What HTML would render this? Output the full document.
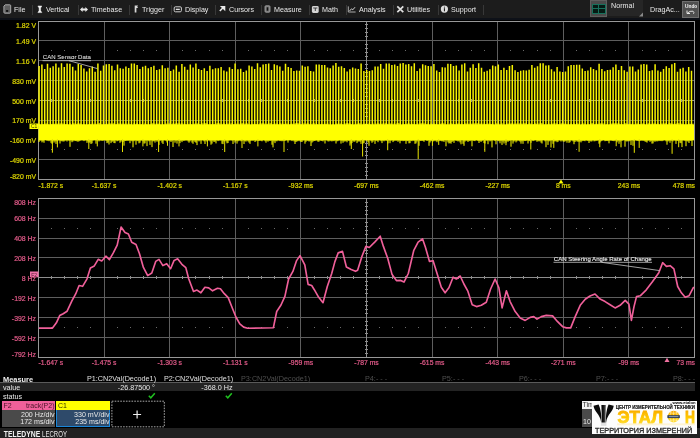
<!DOCTYPE html>
<html><head><meta charset="utf-8"><style>
html,body{margin:0;padding:0;width:700px;height:438px;overflow:hidden;background:#000;}
body{position:relative;font-family:"Liberation Sans",sans-serif;filter:blur(0.3px);}
.a{position:absolute;white-space:nowrap;}
#menu{position:absolute;left:0;top:0;width:700px;height:18px;background:#1c1c1c;}
#menuband{position:absolute;left:0;top:18px;width:700px;height:1.8px;background:#0e1118;}
.mi{position:absolute;top:4.9px;font-size:7.7px;color:#e8e8e8;line-height:10px;transform:scaleX(0.93);transform-origin:0 0;}
.sep{position:absolute;top:5px;width:1px;height:9.5px;background:#383838;}
svg{position:absolute;left:0;top:0;}
</style></head><body>
<div id="menu"></div><div id="menuband"></div>
<div class="mi" style="left:13.7px">File</div>
<div class="mi" style="left:46.3px">Vertical</div>
<div class="mi" style="left:91.2px">Timebase</div>
<div class="mi" style="left:142px">Trigger</div>
<div class="mi" style="left:184.5px">Display</div>
<div class="mi" style="left:228.8px">Cursors</div>
<div class="mi" style="left:273.8px">Measure</div>
<div class="mi" style="left:322px">Math</div>
<div class="mi" style="left:358.8px">Analysis</div>
<div class="mi" style="left:407px">Utilities</div>
<div class="mi" style="left:451.3px">Support</div>
<div class="sep" style="left:32.2px"></div>
<div class="sep" style="left:78px"></div>
<div class="sep" style="left:128.7px"></div>
<div class="sep" style="left:171.2px"></div>
<div class="sep" style="left:214.5px"></div>
<div class="sep" style="left:260.5px"></div>
<div class="sep" style="left:308.7px"></div>
<div class="sep" style="left:346.2px"></div>
<div class="sep" style="left:393px"></div>
<div class="sep" style="left:437.5px"></div>
<div class="sep" style="left:482.5px"></div>
<svg width="700" height="19" style="position:absolute;left:0;top:0">
<path d="M5.2 4.8 H9.8 Q10.7 4.8 10.7 5.7 V12.3 Q10.7 13.2 9.8 13.2 H4.8 Q3.9 13.2 3.9 12.3 V6.2 Z" fill="#5e5e5e" stroke="#b4b4b4" stroke-width="0.9"/>
<rect x="6.1" y="10" width="2.1" height="1.9" fill="#111"/>
<path d="M37.9 6 H41.8 L40.6 8 V10.6 L41.8 12.6 H37.9 L39.1 10.6 V8 Z" fill="#f2f2f2" stroke="#f2f2f2" stroke-width="0.5"/>
<path d="M80 9.5 L82.6 7 V8.6 H85.4 V7 L88 9.5 L85.4 12 V10.4 H82.6 V12 Z" fill="#e8e8e8"/>
<path d="M134.7 12.4 V5.6 H138.1 L137.2 6.8 L138.1 8 H136.4 V12.4 Z" fill="#d8d8d8"/>
<rect x="174.2" y="6.8" width="7.2" height="5" rx="1.2" fill="none" stroke="#cfcfcf" stroke-width="1"/>
<rect x="175.8" y="8.7" width="4" height="1.3" fill="#e0e0e0"/>
<path d="M219.8 11 L223 7.8 M221.8 6.7 H224.5 V9.4 Z" stroke="#e8e8e8" stroke-width="1.6" fill="#e8e8e8"/>
<rect x="265" y="5.8" width="5" height="6.4" rx="0.9" fill="#777" stroke="#aaa" stroke-width="0.8"/>
<rect x="266.7" y="7.3" width="1.6" height="3.4" fill="#111"/>
<rect x="311.9" y="6" width="6.8" height="6.9" rx="1.4" fill="#d4d4d4"/>
<path d="M313.2 8 H317.4 M315.3 8 V11" stroke="#333" stroke-width="0.9"/>
<path d="M348.3 6.4 V12 H355.6" stroke="#bbb" stroke-width="0.9" fill="none"/>
<path d="M349.5 11 L351.5 8.8 L352.8 9.8 L355 7.2" stroke="#d0d0d0" stroke-width="1" fill="none"/>
<path d="M397.3 6.3 L403.3 12.2 M403.3 6.3 L397.3 12.2" stroke="#e0e0e0" stroke-width="1.7"/>
<circle cx="444.4" cy="9.1" r="3.6" fill="#dcdcdc"/>
<rect x="443.9" y="8.2" width="1.1" height="3.1" fill="#222"/><rect x="443.9" y="6.7" width="1.1" height="0.9" fill="#222"/>
</svg>
<div class="a" style="left:589.7px;top:0;width:17.2px;height:16.7px;background:#4a4a4a;box-sizing:border-box;border:1px solid #5e5e5e;"></div>
<div class="a" style="left:591.9px;top:3.9px;width:13.7px;height:9.8px;background:#051a14;box-sizing:border-box;border:1px solid #17705c;"></div>
<div class="a" style="left:598.3px;top:3.9px;width:1px;height:9.8px;background:#17705c;"></div>
<div class="a" style="left:591.9px;top:8.3px;width:13.7px;height:1px;background:#17705c;"></div>
<div class="a" style="left:606.9px;top:0;width:36.4px;height:16px;background:#262626;"></div>
<div class="mi" style="left:611.1px;top:0.8px;">Normal</div>
<svg class="a" style="left:638px;top:11.5px" width="6" height="5"><path d="M5 0.5 V4.5 H1 Z" fill="#8a8a8a"/></svg>
<div class="mi" style="left:650px;top:5.3px;">DragAc...</div>
<div class="a" style="left:681.9px;top:1px;width:17px;height:16.5px;background:#505050;box-sizing:border-box;border:1px solid #6e6e6e;"></div>
<div class="mi" style="left:684.6px;top:2.2px;font-size:5.6px;color:#f4f4f4;line-height:8px;font-weight:bold;transform:scaleX(0.86)">Undo</div>
<svg class="a" style="left:685px;top:9px" width="12" height="6"><path d="M2 1.5 V4.5 H5" stroke="#e8e8e8" stroke-width="1" fill="none"/><path d="M2.2 4.3 Q5 1.5 8 2.2 Q9.5 3 8.5 4.8" stroke="#e8e8e8" stroke-width="0.9" fill="none"/></svg>

<svg width="700" height="438" viewBox="0 0 700 438">
<line x1="104.5" y1="21.5" x2="104.5" y2="179.5" stroke="#5e5e5e" stroke-width="1"/>
<line x1="169.5" y1="21.5" x2="169.5" y2="179.5" stroke="#5e5e5e" stroke-width="1"/>
<line x1="235.5" y1="21.5" x2="235.5" y2="179.5" stroke="#5e5e5e" stroke-width="1"/>
<line x1="300.5" y1="21.5" x2="300.5" y2="179.5" stroke="#5e5e5e" stroke-width="1"/>
<line x1="432.5" y1="21.5" x2="432.5" y2="179.5" stroke="#5e5e5e" stroke-width="1"/>
<line x1="497.5" y1="21.5" x2="497.5" y2="179.5" stroke="#5e5e5e" stroke-width="1"/>
<line x1="563.5" y1="21.5" x2="563.5" y2="179.5" stroke="#5e5e5e" stroke-width="1"/>
<line x1="628.5" y1="21.5" x2="628.5" y2="179.5" stroke="#5e5e5e" stroke-width="1"/>
<line x1="38.5" y1="40.5" x2="694.5" y2="40.5" stroke="#5e5e5e" stroke-width="1"/>
<line x1="38.5" y1="60.5" x2="694.5" y2="60.5" stroke="#5e5e5e" stroke-width="1"/>
<line x1="38.5" y1="80.5" x2="694.5" y2="80.5" stroke="#5e5e5e" stroke-width="1"/>
<line x1="38.5" y1="120.5" x2="694.5" y2="120.5" stroke="#5e5e5e" stroke-width="1"/>
<line x1="38.5" y1="139.5" x2="694.5" y2="139.5" stroke="#5e5e5e" stroke-width="1"/>
<line x1="38.5" y1="159.5" x2="694.5" y2="159.5" stroke="#5e5e5e" stroke-width="1"/>
<line x1="366.5" y1="21.5" x2="366.5" y2="179.5" stroke="#8e8e8e" stroke-width="1"/>
<line x1="38.5" y1="100.5" x2="694.5" y2="100.5" stroke="#8e8e8e" stroke-width="1"/>
<rect x="365.0" y="24.0" width="3" height="1" fill="#8e8e8e"/>
<rect x="365.0" y="28.0" width="3" height="1" fill="#8e8e8e"/>
<rect x="365.0" y="32.0" width="3" height="1" fill="#8e8e8e"/>
<rect x="365.0" y="36.0" width="3" height="1" fill="#8e8e8e"/>
<rect x="365.0" y="44.0" width="3" height="1" fill="#8e8e8e"/>
<rect x="365.0" y="48.0" width="3" height="1" fill="#8e8e8e"/>
<rect x="365.0" y="52.0" width="3" height="1" fill="#8e8e8e"/>
<rect x="365.0" y="56.0" width="3" height="1" fill="#8e8e8e"/>
<rect x="365.0" y="64.0" width="3" height="1" fill="#8e8e8e"/>
<rect x="365.0" y="68.0" width="3" height="1" fill="#8e8e8e"/>
<rect x="365.0" y="72.0" width="3" height="1" fill="#8e8e8e"/>
<rect x="365.0" y="76.0" width="3" height="1" fill="#8e8e8e"/>
<rect x="365.0" y="84.0" width="3" height="1" fill="#8e8e8e"/>
<rect x="365.0" y="88.0" width="3" height="1" fill="#8e8e8e"/>
<rect x="365.0" y="92.0" width="3" height="1" fill="#8e8e8e"/>
<rect x="365.0" y="96.0" width="3" height="1" fill="#8e8e8e"/>
<rect x="365.0" y="104.0" width="3" height="1" fill="#8e8e8e"/>
<rect x="365.0" y="108.0" width="3" height="1" fill="#8e8e8e"/>
<rect x="365.0" y="112.0" width="3" height="1" fill="#8e8e8e"/>
<rect x="365.0" y="116.0" width="3" height="1" fill="#8e8e8e"/>
<rect x="365.0" y="124.0" width="3" height="1" fill="#8e8e8e"/>
<rect x="365.0" y="127.0" width="3" height="1" fill="#8e8e8e"/>
<rect x="365.0" y="131.0" width="3" height="1" fill="#8e8e8e"/>
<rect x="365.0" y="135.0" width="3" height="1" fill="#8e8e8e"/>
<rect x="365.0" y="143.0" width="3" height="1" fill="#8e8e8e"/>
<rect x="365.0" y="147.0" width="3" height="1" fill="#8e8e8e"/>
<rect x="365.0" y="151.0" width="3" height="1" fill="#8e8e8e"/>
<rect x="365.0" y="155.0" width="3" height="1" fill="#8e8e8e"/>
<rect x="365.0" y="163.0" width="3" height="1" fill="#8e8e8e"/>
<rect x="365.0" y="167.0" width="3" height="1" fill="#8e8e8e"/>
<rect x="365.0" y="171.0" width="3" height="1" fill="#8e8e8e"/>
<rect x="365.0" y="175.0" width="3" height="1" fill="#8e8e8e"/>
<rect x="51.0" y="99.0" width="1" height="3" fill="#8e8e8e"/>
<rect x="64.0" y="99.0" width="1" height="3" fill="#8e8e8e"/>
<rect x="77.0" y="99.0" width="1" height="3" fill="#8e8e8e"/>
<rect x="90.0" y="99.0" width="1" height="3" fill="#8e8e8e"/>
<rect x="117.0" y="99.0" width="1" height="3" fill="#8e8e8e"/>
<rect x="130.0" y="99.0" width="1" height="3" fill="#8e8e8e"/>
<rect x="143.0" y="99.0" width="1" height="3" fill="#8e8e8e"/>
<rect x="156.0" y="99.0" width="1" height="3" fill="#8e8e8e"/>
<rect x="182.0" y="99.0" width="1" height="3" fill="#8e8e8e"/>
<rect x="195.0" y="99.0" width="1" height="3" fill="#8e8e8e"/>
<rect x="209.0" y="99.0" width="1" height="3" fill="#8e8e8e"/>
<rect x="222.0" y="99.0" width="1" height="3" fill="#8e8e8e"/>
<rect x="248.0" y="99.0" width="1" height="3" fill="#8e8e8e"/>
<rect x="261.0" y="99.0" width="1" height="3" fill="#8e8e8e"/>
<rect x="274.0" y="99.0" width="1" height="3" fill="#8e8e8e"/>
<rect x="287.0" y="99.0" width="1" height="3" fill="#8e8e8e"/>
<rect x="314.0" y="99.0" width="1" height="3" fill="#8e8e8e"/>
<rect x="327.0" y="99.0" width="1" height="3" fill="#8e8e8e"/>
<rect x="340.0" y="99.0" width="1" height="3" fill="#8e8e8e"/>
<rect x="353.0" y="99.0" width="1" height="3" fill="#8e8e8e"/>
<rect x="379.0" y="99.0" width="1" height="3" fill="#8e8e8e"/>
<rect x="392.0" y="99.0" width="1" height="3" fill="#8e8e8e"/>
<rect x="405.0" y="99.0" width="1" height="3" fill="#8e8e8e"/>
<rect x="418.0" y="99.0" width="1" height="3" fill="#8e8e8e"/>
<rect x="445.0" y="99.0" width="1" height="3" fill="#8e8e8e"/>
<rect x="458.0" y="99.0" width="1" height="3" fill="#8e8e8e"/>
<rect x="471.0" y="99.0" width="1" height="3" fill="#8e8e8e"/>
<rect x="484.0" y="99.0" width="1" height="3" fill="#8e8e8e"/>
<rect x="510.0" y="99.0" width="1" height="3" fill="#8e8e8e"/>
<rect x="523.0" y="99.0" width="1" height="3" fill="#8e8e8e"/>
<rect x="537.0" y="99.0" width="1" height="3" fill="#8e8e8e"/>
<rect x="550.0" y="99.0" width="1" height="3" fill="#8e8e8e"/>
<rect x="576.0" y="99.0" width="1" height="3" fill="#8e8e8e"/>
<rect x="589.0" y="99.0" width="1" height="3" fill="#8e8e8e"/>
<rect x="602.0" y="99.0" width="1" height="3" fill="#8e8e8e"/>
<rect x="615.0" y="99.0" width="1" height="3" fill="#8e8e8e"/>
<rect x="642.0" y="99.0" width="1" height="3" fill="#8e8e8e"/>
<rect x="655.0" y="99.0" width="1" height="3" fill="#8e8e8e"/>
<rect x="668.0" y="99.0" width="1" height="3" fill="#8e8e8e"/>
<rect x="681.0" y="99.0" width="1" height="3" fill="#8e8e8e"/>
<rect x="51.0" y="50.0" width="1" height="1" fill="#6a6a6a"/>
<rect x="64.0" y="50.0" width="1" height="1" fill="#6a6a6a"/>
<rect x="77.0" y="50.0" width="1" height="1" fill="#6a6a6a"/>
<rect x="90.0" y="50.0" width="1" height="1" fill="#6a6a6a"/>
<rect x="117.0" y="50.0" width="1" height="1" fill="#6a6a6a"/>
<rect x="130.0" y="50.0" width="1" height="1" fill="#6a6a6a"/>
<rect x="143.0" y="50.0" width="1" height="1" fill="#6a6a6a"/>
<rect x="156.0" y="50.0" width="1" height="1" fill="#6a6a6a"/>
<rect x="182.0" y="50.0" width="1" height="1" fill="#6a6a6a"/>
<rect x="195.0" y="50.0" width="1" height="1" fill="#6a6a6a"/>
<rect x="209.0" y="50.0" width="1" height="1" fill="#6a6a6a"/>
<rect x="222.0" y="50.0" width="1" height="1" fill="#6a6a6a"/>
<rect x="248.0" y="50.0" width="1" height="1" fill="#6a6a6a"/>
<rect x="261.0" y="50.0" width="1" height="1" fill="#6a6a6a"/>
<rect x="274.0" y="50.0" width="1" height="1" fill="#6a6a6a"/>
<rect x="287.0" y="50.0" width="1" height="1" fill="#6a6a6a"/>
<rect x="314.0" y="50.0" width="1" height="1" fill="#6a6a6a"/>
<rect x="327.0" y="50.0" width="1" height="1" fill="#6a6a6a"/>
<rect x="340.0" y="50.0" width="1" height="1" fill="#6a6a6a"/>
<rect x="353.0" y="50.0" width="1" height="1" fill="#6a6a6a"/>
<rect x="379.0" y="50.0" width="1" height="1" fill="#6a6a6a"/>
<rect x="392.0" y="50.0" width="1" height="1" fill="#6a6a6a"/>
<rect x="405.0" y="50.0" width="1" height="1" fill="#6a6a6a"/>
<rect x="418.0" y="50.0" width="1" height="1" fill="#6a6a6a"/>
<rect x="445.0" y="50.0" width="1" height="1" fill="#6a6a6a"/>
<rect x="458.0" y="50.0" width="1" height="1" fill="#6a6a6a"/>
<rect x="471.0" y="50.0" width="1" height="1" fill="#6a6a6a"/>
<rect x="484.0" y="50.0" width="1" height="1" fill="#6a6a6a"/>
<rect x="510.0" y="50.0" width="1" height="1" fill="#6a6a6a"/>
<rect x="523.0" y="50.0" width="1" height="1" fill="#6a6a6a"/>
<rect x="537.0" y="50.0" width="1" height="1" fill="#6a6a6a"/>
<rect x="550.0" y="50.0" width="1" height="1" fill="#6a6a6a"/>
<rect x="576.0" y="50.0" width="1" height="1" fill="#6a6a6a"/>
<rect x="589.0" y="50.0" width="1" height="1" fill="#6a6a6a"/>
<rect x="602.0" y="50.0" width="1" height="1" fill="#6a6a6a"/>
<rect x="615.0" y="50.0" width="1" height="1" fill="#6a6a6a"/>
<rect x="642.0" y="50.0" width="1" height="1" fill="#6a6a6a"/>
<rect x="655.0" y="50.0" width="1" height="1" fill="#6a6a6a"/>
<rect x="668.0" y="50.0" width="1" height="1" fill="#6a6a6a"/>
<rect x="681.0" y="50.0" width="1" height="1" fill="#6a6a6a"/>
<rect x="51.0" y="149.0" width="1" height="1" fill="#6a6a6a"/>
<rect x="64.0" y="149.0" width="1" height="1" fill="#6a6a6a"/>
<rect x="77.0" y="149.0" width="1" height="1" fill="#6a6a6a"/>
<rect x="90.0" y="149.0" width="1" height="1" fill="#6a6a6a"/>
<rect x="117.0" y="149.0" width="1" height="1" fill="#6a6a6a"/>
<rect x="130.0" y="149.0" width="1" height="1" fill="#6a6a6a"/>
<rect x="143.0" y="149.0" width="1" height="1" fill="#6a6a6a"/>
<rect x="156.0" y="149.0" width="1" height="1" fill="#6a6a6a"/>
<rect x="182.0" y="149.0" width="1" height="1" fill="#6a6a6a"/>
<rect x="195.0" y="149.0" width="1" height="1" fill="#6a6a6a"/>
<rect x="209.0" y="149.0" width="1" height="1" fill="#6a6a6a"/>
<rect x="222.0" y="149.0" width="1" height="1" fill="#6a6a6a"/>
<rect x="248.0" y="149.0" width="1" height="1" fill="#6a6a6a"/>
<rect x="261.0" y="149.0" width="1" height="1" fill="#6a6a6a"/>
<rect x="274.0" y="149.0" width="1" height="1" fill="#6a6a6a"/>
<rect x="287.0" y="149.0" width="1" height="1" fill="#6a6a6a"/>
<rect x="314.0" y="149.0" width="1" height="1" fill="#6a6a6a"/>
<rect x="327.0" y="149.0" width="1" height="1" fill="#6a6a6a"/>
<rect x="340.0" y="149.0" width="1" height="1" fill="#6a6a6a"/>
<rect x="353.0" y="149.0" width="1" height="1" fill="#6a6a6a"/>
<rect x="379.0" y="149.0" width="1" height="1" fill="#6a6a6a"/>
<rect x="392.0" y="149.0" width="1" height="1" fill="#6a6a6a"/>
<rect x="405.0" y="149.0" width="1" height="1" fill="#6a6a6a"/>
<rect x="418.0" y="149.0" width="1" height="1" fill="#6a6a6a"/>
<rect x="445.0" y="149.0" width="1" height="1" fill="#6a6a6a"/>
<rect x="458.0" y="149.0" width="1" height="1" fill="#6a6a6a"/>
<rect x="471.0" y="149.0" width="1" height="1" fill="#6a6a6a"/>
<rect x="484.0" y="149.0" width="1" height="1" fill="#6a6a6a"/>
<rect x="510.0" y="149.0" width="1" height="1" fill="#6a6a6a"/>
<rect x="523.0" y="149.0" width="1" height="1" fill="#6a6a6a"/>
<rect x="537.0" y="149.0" width="1" height="1" fill="#6a6a6a"/>
<rect x="550.0" y="149.0" width="1" height="1" fill="#6a6a6a"/>
<rect x="576.0" y="149.0" width="1" height="1" fill="#6a6a6a"/>
<rect x="589.0" y="149.0" width="1" height="1" fill="#6a6a6a"/>
<rect x="602.0" y="149.0" width="1" height="1" fill="#6a6a6a"/>
<rect x="615.0" y="149.0" width="1" height="1" fill="#6a6a6a"/>
<rect x="642.0" y="149.0" width="1" height="1" fill="#6a6a6a"/>
<rect x="655.0" y="149.0" width="1" height="1" fill="#6a6a6a"/>
<rect x="668.0" y="149.0" width="1" height="1" fill="#6a6a6a"/>
<rect x="681.0" y="149.0" width="1" height="1" fill="#6a6a6a"/>
<rect x="38.5" y="21.5" width="656.0" height="158.0" fill="none" stroke="#989898" stroke-width="1"/>
<line x1="104.5" y1="198.5" x2="104.5" y2="357.5" stroke="#5e5e5e" stroke-width="1"/>
<line x1="169.5" y1="198.5" x2="169.5" y2="357.5" stroke="#5e5e5e" stroke-width="1"/>
<line x1="235.5" y1="198.5" x2="235.5" y2="357.5" stroke="#5e5e5e" stroke-width="1"/>
<line x1="300.5" y1="198.5" x2="300.5" y2="357.5" stroke="#5e5e5e" stroke-width="1"/>
<line x1="432.5" y1="198.5" x2="432.5" y2="357.5" stroke="#5e5e5e" stroke-width="1"/>
<line x1="497.5" y1="198.5" x2="497.5" y2="357.5" stroke="#5e5e5e" stroke-width="1"/>
<line x1="563.5" y1="198.5" x2="563.5" y2="357.5" stroke="#5e5e5e" stroke-width="1"/>
<line x1="628.5" y1="198.5" x2="628.5" y2="357.5" stroke="#5e5e5e" stroke-width="1"/>
<line x1="38.5" y1="218.5" x2="694.5" y2="218.5" stroke="#5e5e5e" stroke-width="1"/>
<line x1="38.5" y1="238.5" x2="694.5" y2="238.5" stroke="#5e5e5e" stroke-width="1"/>
<line x1="38.5" y1="257.5" x2="694.5" y2="257.5" stroke="#5e5e5e" stroke-width="1"/>
<line x1="38.5" y1="297.5" x2="694.5" y2="297.5" stroke="#5e5e5e" stroke-width="1"/>
<line x1="38.5" y1="317.5" x2="694.5" y2="317.5" stroke="#5e5e5e" stroke-width="1"/>
<line x1="38.5" y1="337.5" x2="694.5" y2="337.5" stroke="#5e5e5e" stroke-width="1"/>
<line x1="366.5" y1="198.5" x2="366.5" y2="357.5" stroke="#8e8e8e" stroke-width="1"/>
<line x1="38.5" y1="277.5" x2="694.5" y2="277.5" stroke="#8e8e8e" stroke-width="1"/>
<rect x="365.0" y="202.0" width="3" height="1" fill="#8e8e8e"/>
<rect x="365.0" y="206.0" width="3" height="1" fill="#8e8e8e"/>
<rect x="365.0" y="210.0" width="3" height="1" fill="#8e8e8e"/>
<rect x="365.0" y="214.0" width="3" height="1" fill="#8e8e8e"/>
<rect x="365.0" y="222.0" width="3" height="1" fill="#8e8e8e"/>
<rect x="365.0" y="226.0" width="3" height="1" fill="#8e8e8e"/>
<rect x="365.0" y="230.0" width="3" height="1" fill="#8e8e8e"/>
<rect x="365.0" y="234.0" width="3" height="1" fill="#8e8e8e"/>
<rect x="365.0" y="242.0" width="3" height="1" fill="#8e8e8e"/>
<rect x="365.0" y="246.0" width="3" height="1" fill="#8e8e8e"/>
<rect x="365.0" y="250.0" width="3" height="1" fill="#8e8e8e"/>
<rect x="365.0" y="253.0" width="3" height="1" fill="#8e8e8e"/>
<rect x="365.0" y="261.0" width="3" height="1" fill="#8e8e8e"/>
<rect x="365.0" y="265.0" width="3" height="1" fill="#8e8e8e"/>
<rect x="365.0" y="269.0" width="3" height="1" fill="#8e8e8e"/>
<rect x="365.0" y="273.0" width="3" height="1" fill="#8e8e8e"/>
<rect x="365.0" y="281.0" width="3" height="1" fill="#8e8e8e"/>
<rect x="365.0" y="285.0" width="3" height="1" fill="#8e8e8e"/>
<rect x="365.0" y="289.0" width="3" height="1" fill="#8e8e8e"/>
<rect x="365.0" y="293.0" width="3" height="1" fill="#8e8e8e"/>
<rect x="365.0" y="301.0" width="3" height="1" fill="#8e8e8e"/>
<rect x="365.0" y="305.0" width="3" height="1" fill="#8e8e8e"/>
<rect x="365.0" y="309.0" width="3" height="1" fill="#8e8e8e"/>
<rect x="365.0" y="313.0" width="3" height="1" fill="#8e8e8e"/>
<rect x="365.0" y="321.0" width="3" height="1" fill="#8e8e8e"/>
<rect x="365.0" y="325.0" width="3" height="1" fill="#8e8e8e"/>
<rect x="365.0" y="329.0" width="3" height="1" fill="#8e8e8e"/>
<rect x="365.0" y="333.0" width="3" height="1" fill="#8e8e8e"/>
<rect x="365.0" y="341.0" width="3" height="1" fill="#8e8e8e"/>
<rect x="365.0" y="345.0" width="3" height="1" fill="#8e8e8e"/>
<rect x="365.0" y="349.0" width="3" height="1" fill="#8e8e8e"/>
<rect x="365.0" y="353.0" width="3" height="1" fill="#8e8e8e"/>
<rect x="51.0" y="276.0" width="1" height="3" fill="#8e8e8e"/>
<rect x="64.0" y="276.0" width="1" height="3" fill="#8e8e8e"/>
<rect x="77.0" y="276.0" width="1" height="3" fill="#8e8e8e"/>
<rect x="90.0" y="276.0" width="1" height="3" fill="#8e8e8e"/>
<rect x="117.0" y="276.0" width="1" height="3" fill="#8e8e8e"/>
<rect x="130.0" y="276.0" width="1" height="3" fill="#8e8e8e"/>
<rect x="143.0" y="276.0" width="1" height="3" fill="#8e8e8e"/>
<rect x="156.0" y="276.0" width="1" height="3" fill="#8e8e8e"/>
<rect x="182.0" y="276.0" width="1" height="3" fill="#8e8e8e"/>
<rect x="195.0" y="276.0" width="1" height="3" fill="#8e8e8e"/>
<rect x="209.0" y="276.0" width="1" height="3" fill="#8e8e8e"/>
<rect x="222.0" y="276.0" width="1" height="3" fill="#8e8e8e"/>
<rect x="248.0" y="276.0" width="1" height="3" fill="#8e8e8e"/>
<rect x="261.0" y="276.0" width="1" height="3" fill="#8e8e8e"/>
<rect x="274.0" y="276.0" width="1" height="3" fill="#8e8e8e"/>
<rect x="287.0" y="276.0" width="1" height="3" fill="#8e8e8e"/>
<rect x="314.0" y="276.0" width="1" height="3" fill="#8e8e8e"/>
<rect x="327.0" y="276.0" width="1" height="3" fill="#8e8e8e"/>
<rect x="340.0" y="276.0" width="1" height="3" fill="#8e8e8e"/>
<rect x="353.0" y="276.0" width="1" height="3" fill="#8e8e8e"/>
<rect x="379.0" y="276.0" width="1" height="3" fill="#8e8e8e"/>
<rect x="392.0" y="276.0" width="1" height="3" fill="#8e8e8e"/>
<rect x="405.0" y="276.0" width="1" height="3" fill="#8e8e8e"/>
<rect x="418.0" y="276.0" width="1" height="3" fill="#8e8e8e"/>
<rect x="445.0" y="276.0" width="1" height="3" fill="#8e8e8e"/>
<rect x="458.0" y="276.0" width="1" height="3" fill="#8e8e8e"/>
<rect x="471.0" y="276.0" width="1" height="3" fill="#8e8e8e"/>
<rect x="484.0" y="276.0" width="1" height="3" fill="#8e8e8e"/>
<rect x="510.0" y="276.0" width="1" height="3" fill="#8e8e8e"/>
<rect x="523.0" y="276.0" width="1" height="3" fill="#8e8e8e"/>
<rect x="537.0" y="276.0" width="1" height="3" fill="#8e8e8e"/>
<rect x="550.0" y="276.0" width="1" height="3" fill="#8e8e8e"/>
<rect x="576.0" y="276.0" width="1" height="3" fill="#8e8e8e"/>
<rect x="589.0" y="276.0" width="1" height="3" fill="#8e8e8e"/>
<rect x="602.0" y="276.0" width="1" height="3" fill="#8e8e8e"/>
<rect x="615.0" y="276.0" width="1" height="3" fill="#8e8e8e"/>
<rect x="642.0" y="276.0" width="1" height="3" fill="#8e8e8e"/>
<rect x="655.0" y="276.0" width="1" height="3" fill="#8e8e8e"/>
<rect x="668.0" y="276.0" width="1" height="3" fill="#8e8e8e"/>
<rect x="681.0" y="276.0" width="1" height="3" fill="#8e8e8e"/>
<rect x="51.0" y="228.0" width="1" height="1" fill="#6a6a6a"/>
<rect x="64.0" y="228.0" width="1" height="1" fill="#6a6a6a"/>
<rect x="77.0" y="228.0" width="1" height="1" fill="#6a6a6a"/>
<rect x="90.0" y="228.0" width="1" height="1" fill="#6a6a6a"/>
<rect x="117.0" y="228.0" width="1" height="1" fill="#6a6a6a"/>
<rect x="130.0" y="228.0" width="1" height="1" fill="#6a6a6a"/>
<rect x="143.0" y="228.0" width="1" height="1" fill="#6a6a6a"/>
<rect x="156.0" y="228.0" width="1" height="1" fill="#6a6a6a"/>
<rect x="182.0" y="228.0" width="1" height="1" fill="#6a6a6a"/>
<rect x="195.0" y="228.0" width="1" height="1" fill="#6a6a6a"/>
<rect x="209.0" y="228.0" width="1" height="1" fill="#6a6a6a"/>
<rect x="222.0" y="228.0" width="1" height="1" fill="#6a6a6a"/>
<rect x="248.0" y="228.0" width="1" height="1" fill="#6a6a6a"/>
<rect x="261.0" y="228.0" width="1" height="1" fill="#6a6a6a"/>
<rect x="274.0" y="228.0" width="1" height="1" fill="#6a6a6a"/>
<rect x="287.0" y="228.0" width="1" height="1" fill="#6a6a6a"/>
<rect x="314.0" y="228.0" width="1" height="1" fill="#6a6a6a"/>
<rect x="327.0" y="228.0" width="1" height="1" fill="#6a6a6a"/>
<rect x="340.0" y="228.0" width="1" height="1" fill="#6a6a6a"/>
<rect x="353.0" y="228.0" width="1" height="1" fill="#6a6a6a"/>
<rect x="379.0" y="228.0" width="1" height="1" fill="#6a6a6a"/>
<rect x="392.0" y="228.0" width="1" height="1" fill="#6a6a6a"/>
<rect x="405.0" y="228.0" width="1" height="1" fill="#6a6a6a"/>
<rect x="418.0" y="228.0" width="1" height="1" fill="#6a6a6a"/>
<rect x="445.0" y="228.0" width="1" height="1" fill="#6a6a6a"/>
<rect x="458.0" y="228.0" width="1" height="1" fill="#6a6a6a"/>
<rect x="471.0" y="228.0" width="1" height="1" fill="#6a6a6a"/>
<rect x="484.0" y="228.0" width="1" height="1" fill="#6a6a6a"/>
<rect x="510.0" y="228.0" width="1" height="1" fill="#6a6a6a"/>
<rect x="523.0" y="228.0" width="1" height="1" fill="#6a6a6a"/>
<rect x="537.0" y="228.0" width="1" height="1" fill="#6a6a6a"/>
<rect x="550.0" y="228.0" width="1" height="1" fill="#6a6a6a"/>
<rect x="576.0" y="228.0" width="1" height="1" fill="#6a6a6a"/>
<rect x="589.0" y="228.0" width="1" height="1" fill="#6a6a6a"/>
<rect x="602.0" y="228.0" width="1" height="1" fill="#6a6a6a"/>
<rect x="615.0" y="228.0" width="1" height="1" fill="#6a6a6a"/>
<rect x="642.0" y="228.0" width="1" height="1" fill="#6a6a6a"/>
<rect x="655.0" y="228.0" width="1" height="1" fill="#6a6a6a"/>
<rect x="668.0" y="228.0" width="1" height="1" fill="#6a6a6a"/>
<rect x="681.0" y="228.0" width="1" height="1" fill="#6a6a6a"/>
<rect x="51.0" y="327.0" width="1" height="1" fill="#6a6a6a"/>
<rect x="64.0" y="327.0" width="1" height="1" fill="#6a6a6a"/>
<rect x="77.0" y="327.0" width="1" height="1" fill="#6a6a6a"/>
<rect x="90.0" y="327.0" width="1" height="1" fill="#6a6a6a"/>
<rect x="117.0" y="327.0" width="1" height="1" fill="#6a6a6a"/>
<rect x="130.0" y="327.0" width="1" height="1" fill="#6a6a6a"/>
<rect x="143.0" y="327.0" width="1" height="1" fill="#6a6a6a"/>
<rect x="156.0" y="327.0" width="1" height="1" fill="#6a6a6a"/>
<rect x="182.0" y="327.0" width="1" height="1" fill="#6a6a6a"/>
<rect x="195.0" y="327.0" width="1" height="1" fill="#6a6a6a"/>
<rect x="209.0" y="327.0" width="1" height="1" fill="#6a6a6a"/>
<rect x="222.0" y="327.0" width="1" height="1" fill="#6a6a6a"/>
<rect x="248.0" y="327.0" width="1" height="1" fill="#6a6a6a"/>
<rect x="261.0" y="327.0" width="1" height="1" fill="#6a6a6a"/>
<rect x="274.0" y="327.0" width="1" height="1" fill="#6a6a6a"/>
<rect x="287.0" y="327.0" width="1" height="1" fill="#6a6a6a"/>
<rect x="314.0" y="327.0" width="1" height="1" fill="#6a6a6a"/>
<rect x="327.0" y="327.0" width="1" height="1" fill="#6a6a6a"/>
<rect x="340.0" y="327.0" width="1" height="1" fill="#6a6a6a"/>
<rect x="353.0" y="327.0" width="1" height="1" fill="#6a6a6a"/>
<rect x="379.0" y="327.0" width="1" height="1" fill="#6a6a6a"/>
<rect x="392.0" y="327.0" width="1" height="1" fill="#6a6a6a"/>
<rect x="405.0" y="327.0" width="1" height="1" fill="#6a6a6a"/>
<rect x="418.0" y="327.0" width="1" height="1" fill="#6a6a6a"/>
<rect x="445.0" y="327.0" width="1" height="1" fill="#6a6a6a"/>
<rect x="458.0" y="327.0" width="1" height="1" fill="#6a6a6a"/>
<rect x="471.0" y="327.0" width="1" height="1" fill="#6a6a6a"/>
<rect x="484.0" y="327.0" width="1" height="1" fill="#6a6a6a"/>
<rect x="510.0" y="327.0" width="1" height="1" fill="#6a6a6a"/>
<rect x="523.0" y="327.0" width="1" height="1" fill="#6a6a6a"/>
<rect x="537.0" y="327.0" width="1" height="1" fill="#6a6a6a"/>
<rect x="550.0" y="327.0" width="1" height="1" fill="#6a6a6a"/>
<rect x="576.0" y="327.0" width="1" height="1" fill="#6a6a6a"/>
<rect x="589.0" y="327.0" width="1" height="1" fill="#6a6a6a"/>
<rect x="602.0" y="327.0" width="1" height="1" fill="#6a6a6a"/>
<rect x="615.0" y="327.0" width="1" height="1" fill="#6a6a6a"/>
<rect x="642.0" y="327.0" width="1" height="1" fill="#6a6a6a"/>
<rect x="655.0" y="327.0" width="1" height="1" fill="#6a6a6a"/>
<rect x="668.0" y="327.0" width="1" height="1" fill="#6a6a6a"/>
<rect x="681.0" y="327.0" width="1" height="1" fill="#6a6a6a"/>
<rect x="38.5" y="198.5" width="656.0" height="159.0" fill="none" stroke="#989898" stroke-width="1"/>
<path d="M39.10 65.9V126 M41.90 64.4V126 M44.70 68.9V126 M47.50 63.7V126 M50.30 67.8V126 M53.10 66.3V126 M55.90 63.5V126 M58.70 67.6V126 M61.50 63.3V126 M64.30 66.9V126 M67.10 63.6V126 M69.90 63.8V126 M72.70 66.8V126 M75.50 70.4V126 M78.30 64.1V126 M81.10 65.0V126 M83.90 68.6V126 M86.70 71.5V126 M89.50 68.2V126 M92.30 66.6V126 M95.10 71.8V126 M97.90 63.4V126 M100.70 70.7V126 M103.50 65.6V126 M106.30 64.3V126 M109.10 64.1V126 M111.90 65.8V126 M114.70 70.3V126 M117.50 64.6V126 M120.30 68.2V126 M123.10 68.8V126 M125.90 66.4V126 M128.70 67.9V126 M131.50 63.6V126 M134.30 63.5V126 M137.10 64.9V126 M139.90 69.1V126 M142.70 66.8V126 M145.50 65.8V126 M148.30 68.3V126 M151.10 67.1V126 M153.90 65.7V126 M156.70 70.1V126 M159.50 69.3V126 M162.30 65.2V126 M165.10 68.2V126 M167.90 67.7V126 M170.70 70.9V126 M173.50 69.6V126 M176.30 65.6V126 M179.10 71.8V126 M181.90 64.1V126 M184.70 66.8V126 M187.50 69.8V126 M190.30 64.4V126 M193.10 67.4V126 M195.90 63.4V126 M198.70 69.0V126 M201.50 69.9V126 M204.30 68.2V126 M207.10 70.9V126 M209.90 65.8V126 M212.70 69.3V126 M215.50 68.3V126 M218.30 68.2V126 M221.10 67.1V126 M223.90 70.6V126 M226.70 71.5V126 M229.50 67.3V126 M232.30 69.0V126 M235.10 63.5V126 M237.90 69.3V126 M240.70 68.8V126 M243.50 71.9V126 M246.30 70.4V126 M249.10 65.6V126 M251.90 66.5V126 M254.70 69.0V126 M257.50 63.2V126 M260.30 67.2V126 M263.10 64.5V126 M265.90 64.1V126 M268.70 63.5V126 M271.50 69.9V126 M274.30 64.2V126 M277.10 65.2V126 M279.90 66.5V126 M282.70 70.8V126 M285.50 63.7V126 M288.30 67.0V126 M291.10 67.9V126 M293.90 71.0V126 M296.70 70.4V126 M299.50 70.8V126 M302.30 65.5V126 M305.10 66.7V126 M307.90 66.2V126 M310.70 71.0V126 M313.50 71.6V126 M316.30 64.4V126 M319.10 64.6V126 M321.90 65.1V126 M324.70 65.1V126 M327.50 67.4V126 M330.30 68.3V126 M333.10 65.4V126 M335.90 63.0V126 M338.70 66.8V126 M341.50 66.3V126 M344.30 68.1V126 M347.10 71.6V126 M349.90 69.2V126 M352.70 67.6V126 M355.50 68.6V126 M358.30 69.1V126 M361.10 63.5V126 M363.90 71.1V126 M366.70 70.0V126 M369.50 70.9V126 M372.30 70.2V126 M375.10 66.5V126 M377.90 66.6V126 M380.70 63.9V126 M383.50 68.7V126 M386.30 63.6V126 M389.10 63.6V126 M391.90 64.9V126 M394.70 64.5V126 M397.50 66.1V126 M400.30 63.5V126 M403.10 63.0V126 M405.90 64.4V126 M408.70 63.9V126 M411.50 66.3V126 M414.30 63.2V126 M417.10 70.9V126 M419.90 68.5V126 M422.70 64.3V126 M425.50 65.3V126 M428.30 66.1V126 M431.10 66.3V126 M433.90 64.1V126 M436.70 70.6V126 M439.50 71.9V126 M442.30 67.2V126 M445.10 67.4V126 M447.90 63.8V126 M450.70 63.9V126 M453.50 66.1V126 M456.30 65.4V126 M459.10 70.5V126 M461.90 64.5V126 M464.70 63.2V126 M467.50 71.6V126 M470.30 67.8V126 M473.10 64.3V126 M475.90 67.9V126 M478.70 63.2V126 M481.50 67.8V126 M484.30 71.8V126 M487.10 70.8V126 M489.90 69.3V126 M492.70 65.4V126 M495.50 66.3V126 M498.30 64.5V126 M501.10 69.9V126 M503.90 67.8V126 M506.70 70.0V126 M509.50 66.0V126 M512.30 65.0V126 M515.10 70.3V126 M517.90 71.9V126 M520.70 70.7V126 M523.50 70.3V126 M526.30 70.4V126 M529.10 69.7V126 M531.90 65.0V126 M534.70 67.7V126 M537.50 66.2V126 M540.30 63.3V126 M543.10 63.3V126 M545.90 65.5V126 M548.70 65.3V126 M551.50 69.2V126 M554.30 71.6V126 M557.10 67.0V126 M559.90 71.4V126 M562.70 71.9V126 M565.50 71.6V126 M568.30 66.3V126 M571.10 65.0V126 M573.90 65.0V126 M576.70 64.8V126 M579.50 64.8V126 M582.30 68.6V126 M585.10 71.1V126 M587.90 70.6V126 M590.70 67.3V126 M593.50 68.9V126 M596.30 70.2V126 M599.10 63.8V126 M601.90 68.9V126 M604.70 71.2V126 M607.50 70.0V126 M610.30 69.8V126 M613.10 67.3V126 M615.90 64.6V126 M618.70 70.1V126 M621.50 66.0V126 M624.30 70.2V126 M627.10 71.7V126 M629.90 66.6V126 M632.70 66.6V126 M635.50 71.5V126 M638.30 69.5V126 M641.10 64.5V126 M643.90 64.1V126 M646.70 64.4V126 M649.50 71.1V126 M652.30 70.3V126 M655.10 64.3V126 M657.90 70.4V126 M660.70 71.8V126 M663.50 68.9V126 M666.30 66.2V126 M669.10 67.9V126 M671.90 64.2V126 M674.70 63.1V126 M677.50 71.7V126 M680.30 68.8V126 M683.10 67.7V126 M685.90 71.4V126 M688.70 66.9V126 M691.50 70.8V126" stroke="#f8f400" stroke-width="1.5" fill="none"/>
<rect x="39.0" y="124.5" width="655.0" height="15.8" fill="#ffff00"/>
<path d="M39.00 124.4V142.0 M40.00 123.9V140.4 M41.00 124.6V140.6 M42.00 124.1V142.4 M43.00 124.1V141.4 M44.00 123.9V142.8 M45.00 124.1V140.0 M46.00 123.5V140.0 M47.00 123.6V140.7 M48.00 124.0V140.5 M49.00 124.6V141.2 M50.00 124.4V140.4 M51.00 123.9V142.8 M52.00 124.1V143.8 M53.00 124.0V140.8 M54.00 123.9V142.6 M55.00 123.7V141.4 M56.00 124.4V143.9 M57.00 123.5V141.4 M58.00 124.1V140.2 M59.00 124.7V140.4 M60.00 123.4V143.5 M61.00 123.7V141.1 M62.00 123.3V141.3 M63.00 124.2V141.4 M64.00 123.5V141.5 M65.00 124.0V140.6 M66.00 124.3V140.3 M67.00 123.9V141.5 M68.00 124.3V140.0 M69.00 124.7V140.8 M70.00 123.2V146.8 M71.00 124.7V140.4 M72.00 124.6V142.2 M73.00 123.5V141.4 M74.00 123.3V140.2 M75.00 124.7V141.1 M76.00 124.1V141.0 M77.00 123.8V141.4 M78.00 123.4V141.7 M79.00 124.1V141.3 M80.00 123.3V140.8 M81.00 124.0V140.2 M82.00 124.5V140.2 M83.00 124.3V140.3 M84.00 124.3V141.1 M85.00 124.2V140.3 M86.00 124.8V140.4 M87.00 124.5V142.9 M88.00 124.6V141.4 M89.00 124.0V142.6 M90.00 124.0V142.5 M91.00 124.3V144.0 M92.00 123.8V143.3 M93.00 124.7V140.5 M94.00 123.6V140.1 M95.00 124.7V140.2 M96.00 123.7V143.7 M97.00 124.3V140.4 M98.00 124.1V140.2 M99.00 123.2V141.4 M100.00 123.3V140.4 M101.00 124.8V140.5 M102.00 124.0V140.7 M103.00 124.8V140.8 M104.00 124.2V140.1 M105.00 124.3V140.0 M106.00 124.0V140.9 M107.00 123.7V143.1 M108.00 124.3V142.5 M109.00 123.6V144.5 M110.00 123.5V140.1 M111.00 123.6V143.1 M112.00 124.0V141.8 M113.00 123.5V141.3 M114.00 123.4V143.0 M115.00 124.4V143.2 M116.00 124.2V140.2 M117.00 123.9V141.3 M118.00 123.7V140.9 M119.00 123.5V140.0 M120.00 123.9V142.8 M121.00 123.6V141.7 M122.00 124.4V140.1 M123.00 123.6V142.0 M124.00 124.2V145.7 M125.00 123.6V141.0 M126.00 124.7V141.0 M127.00 123.6V140.4 M128.00 124.8V140.9 M129.00 123.7V140.4 M130.00 124.3V143.2 M131.00 124.1V140.7 M132.00 124.5V141.3 M133.00 124.8V147.3 M134.00 123.3V141.2 M135.00 124.5V140.4 M136.00 123.9V144.7 M137.00 123.3V140.8 M138.00 124.0V141.2 M139.00 124.4V143.3 M140.00 124.8V142.7 M141.00 124.1V140.7 M142.00 124.2V140.2 M143.00 124.8V141.3 M144.00 124.6V143.6 M145.00 123.4V143.3 M146.00 124.2V140.6 M147.00 124.2V146.1 M148.00 124.7V140.4 M149.00 124.3V141.3 M150.00 124.4V144.9 M151.00 124.2V140.3 M152.00 123.5V147.1 M153.00 123.3V141.4 M154.00 124.7V141.1 M155.00 123.6V142.6 M156.00 124.7V140.4 M157.00 124.0V141.8 M158.00 123.6V140.4 M159.00 123.8V144.9 M160.00 124.2V140.8 M161.00 124.5V140.2 M162.00 124.4V142.7 M163.00 124.1V144.0 M164.00 124.7V140.3 M165.00 124.4V140.1 M166.00 123.4V140.9 M167.00 124.1V142.5 M168.00 124.3V140.6 M169.00 123.3V140.4 M170.00 123.8V140.8 M171.00 124.4V142.0 M172.00 124.1V140.6 M173.00 123.4V147.0 M174.00 123.7V140.0 M175.00 123.9V142.7 M176.00 123.3V140.6 M177.00 123.2V143.6 M178.00 124.6V140.2 M179.00 123.3V141.0 M180.00 123.6V143.1 M181.00 124.7V140.8 M182.00 123.3V142.1 M183.00 124.6V140.5 M184.00 123.7V141.0 M185.00 124.0V140.1 M186.00 124.4V140.6 M187.00 124.3V140.0 M188.00 123.8V141.4 M189.00 124.4V142.7 M190.00 123.7V141.4 M191.00 124.0V140.0 M192.00 124.4V142.6 M193.00 124.4V143.8 M194.00 124.1V140.5 M195.00 123.5V142.0 M196.00 124.5V142.8 M197.00 123.5V145.1 M198.00 123.6V140.3 M199.00 124.0V141.4 M200.00 124.1V140.3 M201.00 124.6V143.9 M202.00 123.2V140.3 M203.00 124.7V140.1 M204.00 123.4V141.3 M205.00 123.3V144.0 M206.00 123.3V140.3 M207.00 123.7V141.6 M208.00 124.3V140.6 M209.00 124.4V140.0 M210.00 124.6V141.4 M211.00 124.2V144.7 M212.00 124.1V143.6 M213.00 124.2V140.7 M214.00 124.2V142.0 M215.00 124.1V141.6 M216.00 124.7V143.4 M217.00 123.3V140.1 M218.00 123.4V141.1 M219.00 123.3V140.4 M220.00 123.7V140.4 M221.00 124.8V140.4 M222.00 123.8V143.8 M223.00 124.4V144.1 M224.00 123.3V141.4 M225.00 124.1V140.4 M226.00 124.5V141.4 M227.00 123.5V143.3 M228.00 124.3V143.0 M229.00 123.5V140.5 M230.00 123.6V140.3 M231.00 124.7V140.1 M232.00 123.2V140.5 M233.00 124.4V144.0 M234.00 124.0V140.1 M235.00 124.4V142.6 M236.00 123.7V140.9 M237.00 123.7V143.6 M238.00 124.3V141.3 M239.00 123.6V140.6 M240.00 124.4V140.4 M241.00 123.9V141.3 M242.00 123.2V140.6 M243.00 123.5V140.3 M244.00 124.6V144.0 M245.00 123.5V141.2 M246.00 124.3V141.6 M247.00 123.2V140.3 M248.00 124.2V141.4 M249.00 124.4V142.6 M250.00 124.6V143.9 M251.00 124.5V140.9 M252.00 124.5V140.2 M253.00 123.8V140.9 M254.00 124.3V140.0 M255.00 124.3V142.0 M256.00 123.9V141.2 M257.00 124.2V140.2 M258.00 124.7V141.0 M259.00 124.1V141.0 M260.00 123.3V140.5 M261.00 124.2V140.8 M262.00 123.2V141.3 M263.00 123.6V140.3 M264.00 123.4V140.0 M265.00 124.2V141.2 M266.00 124.5V142.7 M267.00 123.8V140.8 M268.00 123.8V141.7 M269.00 124.6V140.8 M270.00 123.3V140.8 M271.00 123.5V140.7 M272.00 124.6V144.7 M273.00 124.0V147.4 M274.00 124.2V141.4 M275.00 123.5V143.1 M276.00 124.4V141.2 M277.00 123.5V141.3 M278.00 124.2V140.3 M279.00 124.6V140.6 M280.00 123.4V141.1 M281.00 123.6V140.8 M282.00 124.6V141.3 M283.00 123.8V140.8 M284.00 123.9V140.6 M285.00 124.1V141.0 M286.00 123.8V140.0 M287.00 123.6V140.4 M288.00 124.5V142.6 M289.00 124.6V140.2 M290.00 124.1V140.1 M291.00 123.8V140.1 M292.00 123.6V141.1 M293.00 124.0V140.1 M294.00 124.6V141.4 M295.00 123.6V144.0 M296.00 123.2V142.0 M297.00 123.3V141.4 M298.00 123.3V141.2 M299.00 123.6V140.5 M300.00 124.4V141.3 M301.00 124.0V141.9 M302.00 124.4V142.0 M303.00 124.7V140.5 M304.00 123.3V140.2 M305.00 124.5V143.7 M306.00 124.0V141.8 M307.00 123.4V140.5 M308.00 123.4V140.9 M309.00 123.8V141.5 M310.00 124.4V141.2 M311.00 124.2V146.0 M312.00 124.5V142.6 M313.00 123.5V141.6 M314.00 123.2V141.0 M315.00 124.3V141.0 M316.00 124.6V140.1 M317.00 124.0V140.6 M318.00 124.4V141.8 M319.00 124.8V141.6 M320.00 124.2V140.2 M321.00 123.9V140.9 M322.00 124.0V140.9 M323.00 124.4V141.4 M324.00 123.8V140.1 M325.00 124.2V143.5 M326.00 123.8V140.0 M327.00 123.8V140.5 M328.00 123.6V141.4 M329.00 124.7V141.4 M330.00 124.4V140.6 M331.00 124.8V141.2 M332.00 124.6V141.4 M333.00 124.0V140.9 M334.00 124.5V141.2 M335.00 124.7V140.5 M336.00 123.7V143.5 M337.00 123.6V141.3 M338.00 124.1V141.1 M339.00 124.4V140.2 M340.00 123.6V140.5 M341.00 123.7V143.6 M342.00 124.1V140.8 M343.00 124.4V142.8 M344.00 124.5V141.4 M345.00 124.4V141.5 M346.00 123.3V141.1 M347.00 123.4V142.3 M348.00 123.3V140.4 M349.00 123.7V141.0 M350.00 123.5V145.6 M351.00 124.1V143.6 M352.00 124.3V142.9 M353.00 124.7V140.9 M354.00 124.8V141.9 M355.00 124.2V141.4 M356.00 124.7V140.0 M357.00 123.7V143.1 M358.00 123.9V141.7 M359.00 123.5V141.2 M360.00 123.4V141.7 M361.00 124.6V143.9 M362.00 124.7V140.2 M363.00 123.8V143.5 M364.00 124.3V143.1 M365.00 123.6V140.1 M366.00 124.1V140.5 M367.00 124.3V140.4 M368.00 124.3V142.4 M369.00 123.4V145.8 M370.00 124.1V140.0 M371.00 124.2V141.2 M372.00 124.5V142.8 M373.00 123.5V141.7 M374.00 124.5V140.0 M375.00 124.8V143.9 M376.00 123.5V140.7 M377.00 124.2V140.7 M378.00 123.3V142.2 M379.00 123.7V140.3 M380.00 123.8V140.2 M381.00 123.7V141.2 M382.00 124.2V143.1 M383.00 123.4V140.6 M384.00 124.8V141.3 M385.00 123.4V140.4 M386.00 123.4V140.6 M387.00 123.9V140.7 M388.00 123.8V143.4 M389.00 124.6V140.5 M390.00 123.6V143.2 M391.00 123.6V140.7 M392.00 124.1V140.2 M393.00 124.5V142.1 M394.00 123.5V141.1 M395.00 124.4V140.2 M396.00 124.5V140.8 M397.00 123.2V140.3 M398.00 123.3V141.8 M399.00 123.2V140.6 M400.00 124.1V143.3 M401.00 124.6V141.0 M402.00 124.7V140.6 M403.00 123.7V141.2 M404.00 124.1V140.9 M405.00 124.2V140.9 M406.00 124.1V143.8 M407.00 124.1V141.1 M408.00 123.4V141.1 M409.00 123.4V143.3 M410.00 124.1V143.1 M411.00 124.6V140.9 M412.00 123.7V141.2 M413.00 124.1V140.4 M414.00 124.1V140.9 M415.00 124.5V143.8 M416.00 124.2V143.4 M417.00 124.7V141.5 M418.00 123.5V140.2 M419.00 124.6V145.8 M420.00 123.7V140.8 M421.00 123.5V141.0 M422.00 123.3V140.6 M423.00 124.2V141.0 M424.00 123.2V141.8 M425.00 124.4V140.1 M426.00 124.1V140.0 M427.00 124.2V141.0 M428.00 123.6V140.3 M429.00 124.4V145.8 M430.00 124.5V142.5 M431.00 123.5V141.2 M432.00 123.9V140.7 M433.00 124.2V141.4 M434.00 123.5V141.2 M435.00 123.9V140.4 M436.00 124.2V141.3 M437.00 124.2V142.2 M438.00 124.5V140.6 M439.00 124.4V141.1 M440.00 124.0V140.5 M441.00 123.7V141.0 M442.00 123.4V141.4 M443.00 123.4V141.2 M444.00 123.5V141.9 M445.00 124.8V140.0 M446.00 124.4V146.3 M447.00 124.4V140.2 M448.00 124.6V142.4 M449.00 124.5V143.5 M450.00 123.5V143.0 M451.00 123.5V143.7 M452.00 123.7V142.0 M453.00 124.1V141.1 M454.00 124.4V142.9 M455.00 124.0V140.2 M456.00 124.6V140.7 M457.00 123.9V140.7 M458.00 123.5V141.5 M459.00 123.7V140.8 M460.00 124.1V142.4 M461.00 123.8V144.3 M462.00 123.8V140.0 M463.00 124.3V143.8 M464.00 124.0V145.8 M465.00 123.7V141.6 M466.00 123.4V140.5 M467.00 124.0V140.7 M468.00 124.1V142.0 M469.00 123.5V140.8 M470.00 124.2V141.2 M471.00 124.0V140.4 M472.00 123.5V146.3 M473.00 124.3V140.5 M474.00 123.5V141.0 M475.00 123.4V141.1 M476.00 124.3V140.1 M477.00 123.3V140.3 M478.00 123.5V141.0 M479.00 123.8V143.0 M480.00 123.8V141.0 M481.00 123.7V142.0 M482.00 124.6V141.1 M483.00 123.6V140.1 M484.00 124.2V143.1 M485.00 123.9V143.5 M486.00 124.1V140.5 M487.00 123.8V140.6 M488.00 123.9V144.2 M489.00 123.5V140.2 M490.00 124.1V141.4 M491.00 123.9V140.6 M492.00 124.0V147.4 M493.00 123.8V140.2 M494.00 124.8V140.2 M495.00 124.6V141.0 M496.00 123.4V144.3 M497.00 123.6V140.0 M498.00 124.5V141.1 M499.00 123.7V141.2 M500.00 124.7V143.3 M501.00 124.1V141.1 M502.00 123.3V144.9 M503.00 124.8V141.5 M504.00 124.7V143.5 M505.00 124.5V141.1 M506.00 124.7V142.7 M507.00 124.1V140.9 M508.00 123.5V141.9 M509.00 123.8V141.0 M510.00 123.5V140.6 M511.00 123.9V146.7 M512.00 123.2V140.1 M513.00 124.3V143.6 M514.00 123.5V141.5 M515.00 124.1V140.5 M516.00 123.7V142.4 M517.00 123.5V141.3 M518.00 124.4V140.0 M519.00 123.5V140.9 M520.00 123.5V141.6 M521.00 123.9V143.7 M522.00 123.5V141.3 M523.00 124.2V143.8 M524.00 123.5V140.8 M525.00 123.3V141.1 M526.00 123.7V140.9 M527.00 124.4V140.3 M528.00 124.1V143.5 M529.00 123.6V141.2 M530.00 123.4V140.9 M531.00 124.0V142.8 M532.00 124.5V140.3 M533.00 124.2V141.1 M534.00 124.0V140.6 M535.00 123.2V140.1 M536.00 123.8V140.2 M537.00 123.8V141.9 M538.00 124.8V140.8 M539.00 123.4V141.5 M540.00 124.4V140.9 M541.00 123.3V142.6 M542.00 123.3V143.5 M543.00 124.5V140.1 M544.00 124.7V140.1 M545.00 124.1V141.3 M546.00 124.7V147.2 M547.00 124.6V140.6 M548.00 123.9V144.9 M549.00 123.7V141.4 M550.00 124.5V140.7 M551.00 124.4V147.5 M552.00 124.2V140.4 M553.00 123.5V143.8 M554.00 123.7V141.2 M555.00 124.7V141.5 M556.00 123.3V141.1 M557.00 123.9V142.2 M558.00 124.3V141.8 M559.00 124.0V140.2 M560.00 124.6V140.4 M561.00 123.7V141.5 M562.00 123.3V140.1 M563.00 123.4V141.4 M564.00 124.1V141.8 M565.00 123.5V141.4 M566.00 124.3V140.7 M567.00 123.8V142.7 M568.00 124.7V140.3 M569.00 124.6V142.9 M570.00 124.1V142.2 M571.00 123.5V140.4 M572.00 124.0V140.3 M573.00 124.6V141.4 M574.00 123.4V144.2 M575.00 124.0V142.0 M576.00 124.5V140.4 M577.00 123.2V141.5 M578.00 124.3V141.7 M579.00 123.6V141.6 M580.00 124.8V141.5 M581.00 124.6V142.4 M582.00 124.0V141.2 M583.00 123.3V140.7 M584.00 124.6V140.9 M585.00 123.7V141.2 M586.00 124.7V140.1 M587.00 124.4V140.7 M588.00 123.7V140.9 M589.00 124.5V143.0 M590.00 124.1V141.1 M591.00 123.5V141.6 M592.00 123.4V141.3 M593.00 123.3V140.0 M594.00 124.4V141.3 M595.00 124.2V141.2 M596.00 123.8V140.6 M597.00 124.1V140.8 M598.00 123.7V140.2 M599.00 124.3V143.7 M600.00 123.6V142.5 M601.00 123.3V141.3 M602.00 124.0V140.8 M603.00 123.3V140.0 M604.00 124.6V140.3 M605.00 124.8V141.2 M606.00 124.5V141.0 M607.00 123.9V140.9 M608.00 124.6V141.1 M609.00 124.7V143.3 M610.00 124.0V140.7 M611.00 124.2V140.2 M612.00 123.4V140.9 M613.00 123.6V140.9 M614.00 123.3V141.2 M615.00 123.5V140.6 M616.00 123.3V140.6 M617.00 124.4V142.3 M618.00 123.2V140.7 M619.00 123.5V143.8 M620.00 124.0V141.6 M621.00 124.4V147.3 M622.00 124.2V140.9 M623.00 124.1V140.1 M624.00 124.6V140.0 M625.00 123.3V146.7 M626.00 123.4V141.2 M627.00 123.8V141.6 M628.00 124.4V141.0 M629.00 123.8V141.4 M630.00 124.1V140.8 M631.00 124.3V145.0 M632.00 123.8V140.2 M633.00 124.4V145.8 M634.00 124.6V140.8 M635.00 124.3V140.2 M636.00 124.4V140.4 M637.00 123.5V140.8 M638.00 123.8V140.9 M639.00 124.1V141.1 M640.00 124.0V140.9 M641.00 124.4V140.4 M642.00 123.9V140.6 M643.00 123.4V140.5 M644.00 124.0V140.8 M645.00 124.3V141.5 M646.00 124.7V141.9 M647.00 124.7V142.6 M648.00 123.6V140.7 M649.00 123.3V140.3 M650.00 124.3V141.9 M651.00 123.8V141.0 M652.00 124.0V143.6 M653.00 123.6V143.4 M654.00 123.7V141.2 M655.00 123.4V141.8 M656.00 123.9V141.1 M657.00 123.9V141.4 M658.00 123.4V141.2 M659.00 124.1V140.6 M660.00 124.3V141.1 M661.00 124.2V140.8 M662.00 123.4V141.2 M663.00 124.5V140.7 M664.00 123.9V140.2 M665.00 123.3V140.1 M666.00 123.5V141.3 M667.00 124.1V144.7 M668.00 124.7V141.5 M669.00 123.3V140.7 M670.00 123.2V142.8 M671.00 123.7V140.8 M672.00 123.8V140.5 M673.00 123.7V141.4 M674.00 124.2V140.1 M675.00 123.9V140.8 M676.00 124.0V143.9 M677.00 123.2V140.9 M678.00 123.5V140.8 M679.00 123.2V140.5 M680.00 124.6V142.8 M681.00 123.5V143.2 M682.00 124.1V147.1 M683.00 124.0V140.4 M684.00 124.5V140.3 M685.00 124.2V140.9 M686.00 124.7V146.2 M687.00 124.3V141.2 M688.00 124.3V141.5 M689.00 123.7V143.0 M690.00 123.9V140.7 M691.00 123.9V141.0 M692.00 124.1V146.0 M693.00 123.6V140.2" stroke="#ffff00" stroke-width="1" fill="none"/>
<path d="M52.4 139V152.7 M57.4 139V147.4 M88.8 139V149.0 M97.3 139V146.4 M122.5 139V152.0 M142.9 139V146.4 M158.6 139V152.0 M167.5 139V145.8 M179.0 139V146.4 M207.4 139V146.4 M224.7 139V152.0 M242.0 139V148.0 M257.9 139V146.4 M284.0 139V152.0 M351.3 139V149.0 M362.6 139V156.5 M387.7 139V150.2 M418.2 139V159.0 M432.4 139V145.8 M438.7 139V144.9 M484.8 139V151.8 M506.0 139V145.2 M530.8 139V149.5 M553.8 139V147.9 M579.1 139V151.8 M599.8 139V147.2 M616.2 139V146.2 M634.3 139V152.8 M639.2 139V147.9 M672.1 139V153.8 M678.7 139V147.2" stroke="#e8e400" stroke-width="1" fill="none"/>
<rect x="29.5" y="123.5" width="9" height="5.5" fill="#ffff00"/>
<text x="31" y="128.3" font-size="5" fill="#3a3a00" style='font-family:"Liberation Sans",sans-serif;'>C1</text>
<path d="M561 179.5 L563.5 183.5 L558.5 183.5Z" fill="#ffff00"/>
<path d="M38.9 328.1 L52.5 328.1 L56.4 322.8 L59.7 315.6 L63.2 313.7 L67.1 311.2 L71.9 300.9 L75.8 293.7 L79.1 285.5 L82.6 286.3 L86.9 279.1 L90.4 267.9 L94.3 265.9 L98.2 259.3 L101.7 261.0 L105.9 256.2 L109.4 259.7 L113.3 252.9 L117.2 245.1 L121.1 227.0 L125.0 232.5 L128.4 234.0 L131.7 242.2 L136.0 244.5 L139.5 253.8 L143.4 267.4 L147.7 275.6 L151.8 273.0 L155.7 261.4 L159.0 259.4 L162.9 265.6 L166.7 263.7 L170.6 268.7 L174.1 260.4 L177.6 258.8 L181.9 264.3 L185.8 267.6 L188.7 278.8 L193.5 291.5 L197.0 290.1 L200.9 292.8 L204.9 287.3 L208.7 287.9 L212.6 290.8 L217.5 288.3 L220.4 288.8 L224.3 293.7 L228.2 297.6 L232.0 307.3 L235.9 317.0 L239.8 323.8 L243.7 327.1 L247.6 328.3 L273.4 327.7 L276.7 311.5 L281.0 305.0 L284.9 296.3 L288.6 279.0 L292.9 271.4 L296.6 260.6 L300.0 255.6 L304.8 264.9 L308.1 284.4 L311.7 285.5 L314.3 289.7 L318.7 297.3 L323.0 302.7 L327.3 286.5 L331.7 273.5 L334.9 261.6 L338.2 252.9 L342.5 251.4 L346.4 267.0 L351.2 269.6 L355.5 271.3 L357.6 270.2 L362.0 256.2 L365.9 246.4 L369.3 247.5 L374.7 242.1 L380.2 236.2 L383.4 246.4 L387.7 258.3 L392.1 274.6 L396.4 280.6 L400.7 280.4 L404.0 282.1 L408.3 273.5 L413.7 250.7 L418.1 242.1 L422.5 238.8 L425.5 247.6 L429.5 261.4 L433.1 260.7 L437.6 275.2 L441.3 287.3 L445.1 292.8 L448.9 287.8 L453.1 277.2 L456.4 279.0 L460.2 276.0 L463.9 284.0 L467.7 290.8 L472.2 304.8 L476.5 306.6 L481.3 305.3 L486.3 302.3 L490.6 289.0 L495.1 279.0 L498.9 287.8 L502.1 307.9 L506.4 290.8 L510.1 301.6 L515.2 311.6 L520.2 317.9 L525.2 320.4 L530.2 317.4 L533.8 316.6 L537.0 319.1 L541.3 316.6 L546.3 315.4 L552.6 315.9 L557.6 321.7 L562.6 326.7 L566.4 327.9 L570.7 327.9 L575.2 316.6 L580.2 305.3 L585.2 299.3 L590.0 296.0 L595.0 294.0 L600.1 299.1 L605.1 301.6 L610.1 304.8 L615.1 307.9 L620.1 305.3 L625.2 300.3 L628.9 304.1 L631.4 320.4 L634.0 306.6 L636.5 296.6 L640.2 295.8 L646.3 289.8 L652.6 281.5 L658.8 272.7 L662.6 262.7 L666.4 266.4 L670.1 265.7 L673.9 268.9 L677.7 286.5 L681.4 292.8 L685.2 297.3 L689.0 295.8 L693.2 287.8 L694.0 287.3" stroke="#f0609a" stroke-width="1.65" fill="none" stroke-linejoin="round"/>
<rect x="30" y="271.5" width="8.5" height="5.8" fill="#f070a8"/>
<text x="31.2" y="276.6" font-size="5" fill="#502030" style='font-family:"Liberation Sans",sans-serif;'>F2</text>
<path d="M667 357.7 L669.5 362 L664.5 362Z" fill="#f070a0"/>
<text x="42.8" y="59.1" font-size="6.05" fill="#e0e0e0" stroke="#e0e0e0" stroke-width="0.05" style='font-family:"Liberation Sans",sans-serif;'>CAN Sensor Data</text>
<line x1="42.5" y1="60.7" x2="91" y2="60.7" stroke="#c8c8c8" stroke-width="0.8"/>
<line x1="69" y1="60.7" x2="97.4" y2="68.6" stroke="#c8c8c8" stroke-width="0.8"/>
<text x="553.8" y="260.8" font-size="6.05" fill="#e4e4e4" stroke="#e4e4e4" stroke-width="0.15" style='font-family:"Liberation Sans",sans-serif;'>CAN Steering Angle Rate of Change</text>
<line x1="553.5" y1="262.3" x2="652" y2="262.3" stroke="#c8c8c8" stroke-width="0.8"/>
<line x1="601.4" y1="262.3" x2="659.7" y2="270.6" stroke="#c8c8c8" stroke-width="0.8"/>
<text x="36.00" y="28.40" font-size="6.9" fill="#dcd400" stroke="#dcd400" stroke-width="0.22" text-anchor="end" font-weight="normal" style='font-family:"Liberation Sans",sans-serif;'>1.82 V</text>
<text x="36.00" y="43.70" font-size="6.9" fill="#dcd400" stroke="#dcd400" stroke-width="0.22" text-anchor="end" font-weight="normal" style='font-family:"Liberation Sans",sans-serif;'>1.49 V</text>
<text x="36.00" y="63.70" font-size="6.9" fill="#dcd400" stroke="#dcd400" stroke-width="0.22" text-anchor="end" font-weight="normal" style='font-family:"Liberation Sans",sans-serif;'>1.16 V</text>
<text x="36.00" y="83.90" font-size="6.9" fill="#dcd400" stroke="#dcd400" stroke-width="0.22" text-anchor="end" font-weight="normal" style='font-family:"Liberation Sans",sans-serif;'>830 mV</text>
<text x="36.00" y="103.70" font-size="6.9" fill="#dcd400" stroke="#dcd400" stroke-width="0.22" text-anchor="end" font-weight="normal" style='font-family:"Liberation Sans",sans-serif;'>500 mV</text>
<text x="36.00" y="123.20" font-size="6.9" fill="#dcd400" stroke="#dcd400" stroke-width="0.22" text-anchor="end" font-weight="normal" style='font-family:"Liberation Sans",sans-serif;'>170 mV</text>
<text x="36.00" y="143.40" font-size="6.9" fill="#dcd400" stroke="#dcd400" stroke-width="0.22" text-anchor="end" font-weight="normal" style='font-family:"Liberation Sans",sans-serif;'>-160 mV</text>
<text x="36.00" y="163.20" font-size="6.9" fill="#dcd400" stroke="#dcd400" stroke-width="0.22" text-anchor="end" font-weight="normal" style='font-family:"Liberation Sans",sans-serif;'>-490 mV</text>
<text x="36.00" y="179.00" font-size="6.9" fill="#dcd400" stroke="#dcd400" stroke-width="0.22" text-anchor="end" font-weight="normal" style='font-family:"Liberation Sans",sans-serif;'>-820 mV</text>
<text x="36.00" y="205.40" font-size="6.9" fill="#e05a88" stroke="#e05a88" stroke-width="0.22" text-anchor="end" font-weight="normal" style='font-family:"Liberation Sans",sans-serif;'>808 Hz</text>
<text x="36.00" y="221.20" font-size="6.9" fill="#e05a88" stroke="#e05a88" stroke-width="0.22" text-anchor="end" font-weight="normal" style='font-family:"Liberation Sans",sans-serif;'>608 Hz</text>
<text x="36.00" y="241.10" font-size="6.9" fill="#e05a88" stroke="#e05a88" stroke-width="0.22" text-anchor="end" font-weight="normal" style='font-family:"Liberation Sans",sans-serif;'>408 Hz</text>
<text x="36.00" y="260.90" font-size="6.9" fill="#e05a88" stroke="#e05a88" stroke-width="0.22" text-anchor="end" font-weight="normal" style='font-family:"Liberation Sans",sans-serif;'>208 Hz</text>
<text x="36.00" y="280.90" font-size="6.9" fill="#e05a88" stroke="#e05a88" stroke-width="0.22" text-anchor="end" font-weight="normal" style='font-family:"Liberation Sans",sans-serif;'>8 Hz</text>
<text x="36.00" y="301.10" font-size="6.9" fill="#e05a88" stroke="#e05a88" stroke-width="0.22" text-anchor="end" font-weight="normal" style='font-family:"Liberation Sans",sans-serif;'>-192 Hz</text>
<text x="36.00" y="320.90" font-size="6.9" fill="#e05a88" stroke="#e05a88" stroke-width="0.22" text-anchor="end" font-weight="normal" style='font-family:"Liberation Sans",sans-serif;'>-392 Hz</text>
<text x="36.00" y="340.90" font-size="6.9" fill="#e05a88" stroke="#e05a88" stroke-width="0.22" text-anchor="end" font-weight="normal" style='font-family:"Liberation Sans",sans-serif;'>-592 Hz</text>
<text x="36.00" y="356.70" font-size="6.9" fill="#e05a88" stroke="#e05a88" stroke-width="0.22" text-anchor="end" font-weight="normal" style='font-family:"Liberation Sans",sans-serif;'>-792 Hz</text>
<text x="38.50" y="188.10" font-size="6.8" fill="#dcd400" stroke="#dcd400" stroke-width="0.22" text-anchor="start" font-weight="normal" style='font-family:"Liberation Sans",sans-serif;'>-1.872 s</text>
<text x="104.10" y="188.10" font-size="6.8" fill="#dcd400" stroke="#dcd400" stroke-width="0.22" text-anchor="middle" font-weight="normal" style='font-family:"Liberation Sans",sans-serif;'>-1.637 s</text>
<text x="169.70" y="188.10" font-size="6.8" fill="#dcd400" stroke="#dcd400" stroke-width="0.22" text-anchor="middle" font-weight="normal" style='font-family:"Liberation Sans",sans-serif;'>-1.402 s</text>
<text x="235.30" y="188.10" font-size="6.8" fill="#dcd400" stroke="#dcd400" stroke-width="0.22" text-anchor="middle" font-weight="normal" style='font-family:"Liberation Sans",sans-serif;'>-1.167 s</text>
<text x="300.90" y="188.10" font-size="6.8" fill="#dcd400" stroke="#dcd400" stroke-width="0.22" text-anchor="middle" font-weight="normal" style='font-family:"Liberation Sans",sans-serif;'>-932 ms</text>
<text x="366.50" y="188.10" font-size="6.8" fill="#dcd400" stroke="#dcd400" stroke-width="0.22" text-anchor="middle" font-weight="normal" style='font-family:"Liberation Sans",sans-serif;'>-697 ms</text>
<text x="432.10" y="188.10" font-size="6.8" fill="#dcd400" stroke="#dcd400" stroke-width="0.22" text-anchor="middle" font-weight="normal" style='font-family:"Liberation Sans",sans-serif;'>-462 ms</text>
<text x="497.70" y="188.10" font-size="6.8" fill="#dcd400" stroke="#dcd400" stroke-width="0.22" text-anchor="middle" font-weight="normal" style='font-family:"Liberation Sans",sans-serif;'>-227 ms</text>
<text x="563.30" y="188.10" font-size="6.8" fill="#dcd400" stroke="#dcd400" stroke-width="0.22" text-anchor="middle" font-weight="normal" style='font-family:"Liberation Sans",sans-serif;'>8 ms</text>
<text x="628.90" y="188.10" font-size="6.8" fill="#dcd400" stroke="#dcd400" stroke-width="0.22" text-anchor="middle" font-weight="normal" style='font-family:"Liberation Sans",sans-serif;'>243 ms</text>
<text x="695.00" y="188.10" font-size="6.8" fill="#dcd400" stroke="#dcd400" stroke-width="0.22" text-anchor="end" font-weight="normal" style='font-family:"Liberation Sans",sans-serif;'>478 ms</text>
<text x="38.50" y="365.30" font-size="6.8" fill="#e05a88" stroke="#e05a88" stroke-width="0.22" text-anchor="start" font-weight="normal" style='font-family:"Liberation Sans",sans-serif;'>-1.647 s</text>
<text x="104.10" y="365.30" font-size="6.8" fill="#e05a88" stroke="#e05a88" stroke-width="0.22" text-anchor="middle" font-weight="normal" style='font-family:"Liberation Sans",sans-serif;'>-1.475 s</text>
<text x="169.70" y="365.30" font-size="6.8" fill="#e05a88" stroke="#e05a88" stroke-width="0.22" text-anchor="middle" font-weight="normal" style='font-family:"Liberation Sans",sans-serif;'>-1.303 s</text>
<text x="235.30" y="365.30" font-size="6.8" fill="#e05a88" stroke="#e05a88" stroke-width="0.22" text-anchor="middle" font-weight="normal" style='font-family:"Liberation Sans",sans-serif;'>-1.131 s</text>
<text x="300.90" y="365.30" font-size="6.8" fill="#e05a88" stroke="#e05a88" stroke-width="0.22" text-anchor="middle" font-weight="normal" style='font-family:"Liberation Sans",sans-serif;'>-959 ms</text>
<text x="366.50" y="365.30" font-size="6.8" fill="#e05a88" stroke="#e05a88" stroke-width="0.22" text-anchor="middle" font-weight="normal" style='font-family:"Liberation Sans",sans-serif;'>-787 ms</text>
<text x="432.10" y="365.30" font-size="6.8" fill="#e05a88" stroke="#e05a88" stroke-width="0.22" text-anchor="middle" font-weight="normal" style='font-family:"Liberation Sans",sans-serif;'>-615 ms</text>
<text x="497.70" y="365.30" font-size="6.8" fill="#e05a88" stroke="#e05a88" stroke-width="0.22" text-anchor="middle" font-weight="normal" style='font-family:"Liberation Sans",sans-serif;'>-443 ms</text>
<text x="563.30" y="365.30" font-size="6.8" fill="#e05a88" stroke="#e05a88" stroke-width="0.22" text-anchor="middle" font-weight="normal" style='font-family:"Liberation Sans",sans-serif;'>-271 ms</text>
<text x="628.90" y="365.30" font-size="6.8" fill="#e05a88" stroke="#e05a88" stroke-width="0.22" text-anchor="middle" font-weight="normal" style='font-family:"Liberation Sans",sans-serif;'>-99 ms</text>
<text x="695.00" y="365.30" font-size="6.8" fill="#e05a88" stroke="#e05a88" stroke-width="0.22" text-anchor="end" font-weight="normal" style='font-family:"Liberation Sans",sans-serif;'>73 ms</text>
</svg>

<div class="a" style="left:3px;top:374.5px;font-size:7.4px;font-weight:bold;color:#f0f0f0;line-height:9px">Measure</div>
<div class="a" style="left:0;top:382px;width:695px;height:1px;background:#5a5a5a"></div>
<div class="a" style="left:0;top:383px;width:695px;height:8px;background:#232323"></div>
<div class="a" style="left:3px;top:383px;font-size:7.2px;color:#e8e8e8;line-height:9px">value</div>
<div class="a" style="left:3px;top:392.2px;font-size:7.2px;color:#e8e8e8;line-height:9px">status</div>
<div class="a" style="left:86.9px;top:374.2px;font-size:7.25px;color:#e0e0e0;line-height:9px">P1:CN2Val(Decode1)</div>
<div class="a" style="left:164px;top:374.2px;font-size:7.25px;color:#e0e0e0;line-height:9px">P2:CN2Val(Decode1)</div>
<div class="a" style="left:241px;top:374.2px;font-size:7.25px;color:#505050;line-height:9px">P3:CN2Val(Decode1)</div>
<div class="a" style="left:365px;top:374.2px;font-size:7.25px;color:#505050;line-height:9px">P4:- - -</div>
<div class="a" style="left:442px;top:374.2px;font-size:7.25px;color:#505050;line-height:9px">P5:- - -</div>
<div class="a" style="left:519px;top:374.2px;font-size:7.25px;color:#505050;line-height:9px">P6:- - -</div>
<div class="a" style="left:596px;top:374.2px;font-size:7.25px;color:#505050;line-height:9px">P7:- - -</div>
<div class="a" style="left:673px;top:374.2px;font-size:7.25px;color:#505050;line-height:9px">P8:- - -</div>
<div class="a" style="right:545px;top:383.3px;font-size:7.2px;color:#e8e8e8;line-height:9px">-26.87500 °</div>
<div class="a" style="right:467.5px;top:383.3px;font-size:7.2px;color:#e8e8e8;line-height:9px">-368.0 Hz</div>
<svg class="a" style="left:0;top:390px" width="700" height="10"><path d="M148.8 5.8 L150.8 7.8 L154.8 3.2" stroke="#20c020" stroke-width="1.5" fill="none"/><path d="M225.8 5.8 L227.8 7.8 L231.8 3.2" stroke="#20c020" stroke-width="1.5" fill="none"/></svg>
<div class="a" style="left:2px;top:401px;width:53.3px;height:8.5px;background:#f0609a"></div>
<div class="a" style="left:3.5px;top:400.8px;font-size:7px;color:#4a1428;line-height:9px">F2</div>
<div class="a" style="right:645.5px;top:400.8px;font-size:7px;color:#4a1428;line-height:9px">track(P2)</div>
<div class="a" style="left:2px;top:409.5px;width:53.3px;height:17.8px;background:#4a4a4a"></div>
<div class="a" style="right:645.5px;top:410.6px;font-size:7.1px;color:#e8e8e8;line-height:9px">200 Hz/div</div>
<div class="a" style="right:645.5px;top:417.9px;font-size:7.1px;color:#e8e8e8;line-height:9px">172 ms/div</div>
<div class="a" style="left:56px;top:400.7px;width:54.3px;height:9px;background:#ffff00"></div>
<div class="a" style="left:58px;top:400.8px;font-size:7px;color:#303000;line-height:9px">C1</div>
<div class="a" style="left:56px;top:409.7px;width:54.3px;height:17.8px;background:#2e4a6a;box-sizing:border-box;border:1px solid #1a86d8;border-top:none"></div>
<div class="a" style="right:590.5px;top:410.6px;font-size:7.1px;color:#e8e8e8;line-height:9px">330 mV/div</div>
<div class="a" style="right:590.5px;top:417.9px;font-size:7.1px;color:#e8e8e8;line-height:9px">235 ms/div</div>
<svg class="a" style="left:110px;top:399px" width="58" height="30"><rect x="1.9" y="2.2" width="52.4" height="25.6" fill="none" stroke="#a8a8a8" stroke-width="1" stroke-dasharray="1.6 1.2"/></svg>
<svg class="a" style="left:132px;top:409px" width="11" height="11"><path d="M5.1 1.5 V9.5 M1.1 5.5 H9.1" stroke="#f0f0f0" stroke-width="1.2"/></svg>
<div class="a" style="left:0;top:428.2px;width:700px;height:9.8px;background:#222222"></div>
<svg class="a" style="left:0;top:428px" width="80" height="10"><text x="3.8" y="9" font-size="8.8" font-weight="bold" fill="#f2f2f2" textLength="36.4" lengthAdjust="spacingAndGlyphs" style='font-family:"Liberation Sans",sans-serif;'>TELEDYNE</text><text x="42" y="9" font-size="8.8" fill="#e4e4e4" textLength="25" lengthAdjust="spacingAndGlyphs" style='font-family:"Liberation Sans",sans-serif;'>LECROY</text></svg>

<div class="a" style="left:581.7px;top:401.3px;width:30px;height:7.3px;background:#f4f4f4"></div>
<div class="a" style="left:582.5px;top:400.6px;font-size:7px;color:#333;line-height:8px">Tim</div>
<div class="a" style="left:581.7px;top:408.6px;width:30px;height:18.6px;background:#4a4a4a"></div>
<div class="a" style="left:583px;top:417.5px;font-size:7.1px;color:#e8e8e8;line-height:9px">10</div>
<div class="a" style="left:592px;top:401px;width:104.5px;height:33px;background:#fdfdfd"></div>
<svg class="a" style="left:592px;top:401px" width="105" height="33">
<defs><linearGradient id="g" x1="0" y1="0" x2="0" y2="1"><stop offset="0" stop-color="#f7a400"/><stop offset="0.55" stop-color="#ffc800"/><stop offset="1" stop-color="#ffe040"/></linearGradient>
<linearGradient id="r" x1="0" y1="0" x2="0" y2="1"><stop offset="0" stop-color="#ffe9a0"/><stop offset="1" stop-color="#ffffff"/></linearGradient></defs>
<linearGradient id="st" x1="0" y1="0" x2="1" y2="0"><stop offset="0" stop-color="#000"/><stop offset="0.6" stop-color="#222"/><stop offset="1" stop-color="#777"/></linearGradient>
<path d="M1.52 4.76 C1.63 5.19 1.79 6.41 2.16 7.32 C2.53 8.23 3.07 9.14 3.76 10.20 C4.45 11.26 5.57 12.47 6.32 13.70 C7.07 14.92 7.76 16.22 8.24 17.55 C8.72 18.88 9.04 21.01 9.20 21.70 L9.52 21.70 C9.47 20.47 9.36 16.32 9.20 14.35 C9.04 12.38 8.83 11.27 8.56 9.88 C8.29 8.50 7.92 7.09 7.60 6.04 C7.28 4.99 6.80 4.01 6.64 3.60 Z" fill="#0a0a0a"/>
<path d="M21.74 4.76 C21.63 5.19 21.47 6.41 21.10 7.32 C20.73 8.23 20.19 9.14 19.50 10.20 C18.81 11.26 17.69 12.47 16.94 13.70 C16.19 14.92 15.50 16.22 15.02 17.55 C14.54 18.88 14.22 21.01 14.06 21.70 L13.74 21.70 C13.79 20.47 13.90 16.32 14.06 14.35 C14.22 12.38 14.43 11.27 14.70 9.88 C14.97 8.50 15.34 7.09 15.66 6.04 C15.98 4.99 16.46 4.01 16.62 3.60 Z" fill="#0a0a0a"/>
<path d="M9.4 3.9 H13.86 L13.6 21.7 H9.9 Z" fill="url(#st)"/>
<rect x="8.8" y="21.6" width="5.6" height="3.2" fill="#d8d8d8" opacity="0.8"/>
<text x="25.5" y="21.8" font-size="16.3" font-weight="bold" fill="url(#g)" stroke="url(#g)" stroke-width="0.8" style='font-family:"Liberation Sans",sans-serif;' textLength="45.5" lengthAdjust="spacingAndGlyphs">ЭТАЛ</text>
<circle cx="81.6" cy="15.6" r="5.9" fill="url(#g)"/>
<path d="M81.6 9.7 V21.5 M75.7 15.6 H87.5 M77.2 11.6 Q81.6 13.2 86 11.6 M77.2 19.6 Q81.6 18 86 19.6 M79 10.2 Q76.5 15.6 79 21 M84.2 10.2 Q86.7 15.6 84.2 21" stroke="#fff3c0" stroke-width="0.55" fill="none"/>
<rect x="75.4" y="14.2" width="12.4" height="2.9" fill="#2a3a5a"/>
<rect x="76.8" y="15.2" width="9.6" height="0.9" fill="#9ab"/>
<text x="93" y="21.8" font-size="16.3" font-weight="bold" fill="url(#g)" stroke="url(#g)" stroke-width="0.8" style='font-family:"Liberation Sans",sans-serif;' textLength="10" lengthAdjust="spacingAndGlyphs">Н</text>
<rect x="25" y="22.6" width="78" height="2.5" fill="url(#r)" opacity="0.7"/>
<text x="23.8" y="7.9" font-size="4.6" font-weight="bold" fill="#111" stroke="#111" stroke-width="0.15" style='font-family:"Liberation Sans",sans-serif;' textLength="79.2" lengthAdjust="spacingAndGlyphs">ЦЕНТР ИЗМЕРИТЕЛЬНОЙ ТЕХНИКИ</text>
<text x="80.5" y="3.1" font-size="3.3" font-weight="bold" fill="#000" style='font-family:"Liberation Sans",sans-serif;' textLength="23" lengthAdjust="spacingAndGlyphs">www.etalon</text>
<text x="3.1" y="32.3" font-size="7.3" fill="#262626" stroke="#262626" stroke-width="0.3" style='font-family:"Liberation Sans",sans-serif;' textLength="97" lengthAdjust="spacingAndGlyphs">ТЕРРИТОРИЯ ИЗМЕРЕНИЙ</text>
</svg>


</body></html>
